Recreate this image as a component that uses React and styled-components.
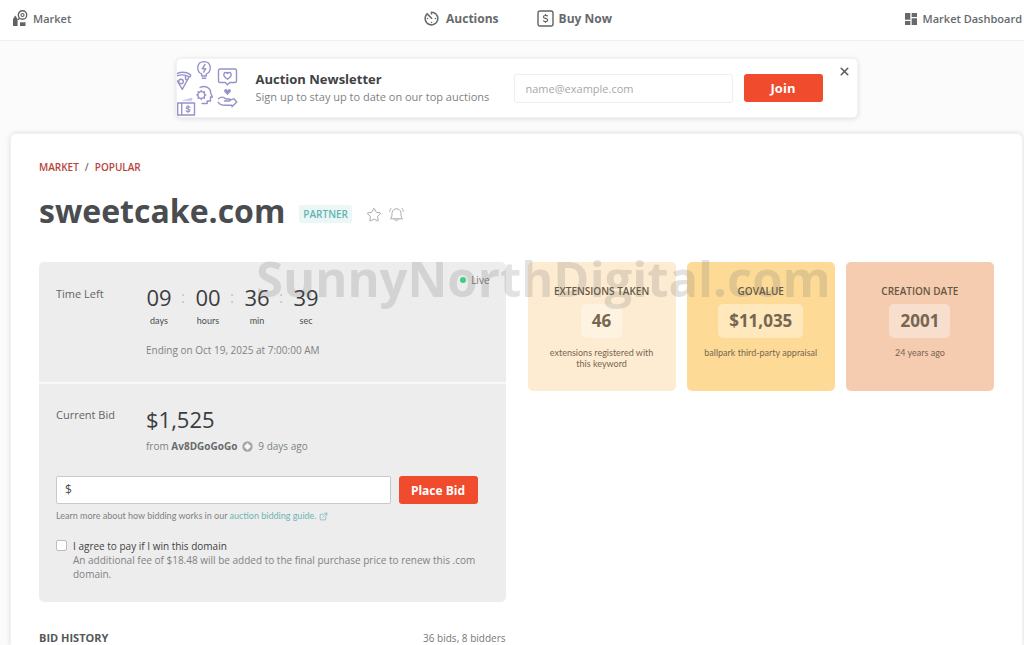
import { useState } from 'react';
import styled, { createGlobalStyle } from 'styled-components';
import { MdAvTimer, MdDashboard } from 'react-icons/md';
import { ExternalLink, Star, X } from 'lucide-react';

const smallFont = `
  font-family: Lato, 'Open Sans', sans-serif;
  font-size: 9px;
`;

const GlobalStyle = createGlobalStyle`
  * { box-sizing: border-box; }

  body {
    margin: 0;
    background: #fbfbfb;
    color: #4a4d50;
    font-family: 'Open Sans', 'Noto Sans', sans-serif;
    font-size: 11px;
    line-height: 14px;
  }

  h1, h2, p, dl, dd { margin: 0; }
  button, input { font-family: inherit; }
  a { color: inherit; text-decoration: none; }
`;

const Page = styled.div`
  display: flex;
  flex-direction: column;
  min-height: 100vh;
`;

const Header = styled.header`
  display: grid;
  grid-template-columns: 1fr auto 1fr;
  align-items: center;
  height: 41px;
  padding: 0 2px 3px 12px;
  background: #fff;
  border-bottom: 1px solid #f0f0f0;
`;

const Nav = styled.nav`
  display: flex;
  gap: 38px;
`;

const NavLink = styled.a`
  display: flex;
  align-items: center;
  justify-self: ${props => props.$align || 'start'};
  gap: ${props => (props.$align ? '4px' : '5px')};
  font-size: ${props => (props.$large ? '12px' : '11px')};
  font-weight: ${props => (props.$large ? 700 : 600)};
  color: #676a6c;
  white-space: nowrap;
`;

const Main = styled.main`
  display: flex;
  flex: 1;
  flex-direction: column;
  padding: 17px 1px 0 10px;
`;

const Banner = styled.form`
  display: flex;
  align-items: center;
  align-self: center;
  width: 100%;
  max-width: 682px;
  height: 60px;
  margin-bottom: 15px;
  padding-right: 6px;
  background: #fff;
  border: 1px solid #f2f2f2;
  border-radius: 5px;
  box-shadow: 0 1px 5px rgba(0, 0, 0, 0.12);
`;

const BannerText = styled.div`
  flex: 1;
  margin-left: 18px;
  white-space: nowrap;
`;

const BannerTitle = styled.h2`
  font-size: 13px;
  font-weight: 700;
  line-height: 18px;
  color: #3f4244;
`;

const Muted = styled.p`
  line-height: ${props => (props.$tall ? '18px' : '14px')};
  color: #808284;
`;

const EmailInput = styled.input`
  width: 219px;
  height: 29px;
  padding: 0 11px;
  font-size: 11px;
  border: 1px solid #eee;
  border-radius: 3px;
  outline: none;

  &::placeholder { color: #a8a8a8; }
`;

const Button = styled.button`
  width: 79px;
  height: 28px;
  margin-left: ${props => (props.$tight ? '8px' : '11px')};
  padding: 0;
  font-size: ${props => (props.$tight ? '12px' : '13px')};
  font-weight: 700;
  color: #fff;
  background: #f04b2d;
  border: 0;
  border-radius: 3px;
  cursor: pointer;
`;

const CloseButton = styled.button`
  display: flex;
  align-self: flex-start;
  margin: 6px 0 0 15px;
  padding: 0;
  color: #5c5f61;
  background: none;
  border: 0;
  cursor: pointer;
`;

const Card = styled.section`
  position: relative;
  flex: 1;
  padding: 26px 28px 0;
  background: #fff;
  border: 1px solid #f1f1f1;
  border-bottom: 0;
  border-radius: 6px 6px 0 0;
  box-shadow: 0 0 5px rgba(0, 0, 0, 0.12);
`;

const Breadcrumb = styled.nav`
  display: flex;
  gap: 6px;
  font-size: 10px;
  font-weight: 600;
  color: #6d7072;

  a { color: #b8453a; }
`;

const TitleRow = styled.div`
  display: flex;
  align-items: center;
  margin: 14px 0 28px;
  color: #aaa;
`;

const Title = styled.h1`
  font-size: 32px;
  font-weight: 700;
  line-height: 46px;
  color: #4a4d50;
`;

const Tag = styled.span`
  margin: 5px 14px 0;
  padding: 2px 4px;
  font-size: 10px;
  font-weight: 600;
  color: #66b4af;
  background: #eaf7f6;
  border-radius: 3px;
`;

const IconButton = styled.button`
  display: flex;
  margin: 7px 7px 0 0;
  padding: 0;
  color: inherit;
  background: none;
  border: 0;
  cursor: pointer;
`;

const Columns = styled.div`
  display: grid;
  grid-template-columns: 1fr 1fr;
  align-items: start;
  gap: 22px;
`;

const Panel = styled.div`
  background: #ededed;
  border-radius: 5px;
`;

const PanelPart = styled.section`
  min-height: ${props => props.$height};
  padding: ${props => props.$padding};

  & + & { border-top: 2px solid #f8f8f8; }
`;

const PanelRow = styled.div`
  display: grid;
  grid-template-columns: 90px 1fr auto;
`;

const Label = styled.span`
  padding-top: 3px;
  font-size: 11px;
  color: #616466;
`;

const Clock = styled.div`
  display: flex;
`;

const ClockCell = styled.div`
  width: 26px;
  ${smallFont}
  text-align: center;

  & + & { margin-left: 23px; }
`;

const Digits = styled.div`
  position: relative;
  margin-bottom: 4px;
  font-family: 'Open Sans', 'Noto Sans', sans-serif;
  font-size: 22px;
  line-height: 26px;
  color: #3a3d40;
`;

/* faint separator that hangs in the gap after the digits */
const Colon = styled.span`
  position: absolute;
  left: 35px;
  font-size: 16px;
  color: #c4c4c4;
`;

const Ending = styled(Muted)`
  margin-top: 15px;
  font-size: 10px;
`;

const Live = styled.span`
  display: flex;
  align-items: center;
  align-self: start;
  gap: 5px;
  margin-top: -11px;
  font-size: 10px;
  color: #777;

  &::before {
    content: '';
    width: 6px;
    height: 6px;
    background: #43cd80;
    border-radius: 50%;
  }
`;

const Price = styled.div`
  font-size: 22px;
  line-height: 28px;
  color: #3a3d40;
`;

const Bidder = styled(Muted)`
  display: flex;
  align-items: center;
  gap: 5px;
  margin-top: 6px;
  font-size: 10px;

  b { color: #686b6d; }
`;

const BidForm = styled.form`
  display: flex;
  margin: 23px 0 5px;
`;

const BidField = styled.label`
  display: flex;
  flex: 1;
  align-items: center;
  height: 28px;
  padding: 0 8px;
  font-size: 12px;
  background: #fff;
  border: 1px solid #c9c9c9;
  border-radius: 2px;
`;

const BidInput = styled.input`
  flex: 1;
  min-width: 0;
  padding: 0 4px;
  font-size: 12px;
  border: 0;
  outline: none;
`;

const Help = styled(Muted)`
  display: flex;
  align-items: center;
  gap: 2px;
  ${smallFont}

  a {
    display: flex;
    align-items: center;
    gap: 3px;
    color: #6fb5b3;
  }
`;

const Agreement = styled.div`
  display: grid;
  grid-template-columns: 11px 1fr;
  column-gap: 6px;
  margin-top: 16px;
  font-size: 10px;

  label { color: #3f4244; }
  p { grid-column: 2; }
`;

const Checkbox = styled.input`
  appearance: none;
  width: 11px;
  height: 11px;
  margin: 1px 0 0;
  background: #fff;
  border: 1px solid #bdbdbd;
  border-radius: 2px;

  &:checked { background: #66b4af; }
`;

const Stats = styled.dl`
  display: grid;
  grid-template-columns: repeat(3, 1fr);
  gap: 11px;
`;

const Stat = styled.div`
  display: flex;
  flex-direction: column;
  align-items: center;
  height: 129px;
  padding: 22px 16px 0;
  ${smallFont}
  line-height: 11px;
  text-align: center;
  color: #766651;
  background: ${props => props.$color};
  border-radius: 5px;

  dt {
    font-family: 'Open Sans', 'Noto Sans', sans-serif;
    font-size: 10px;
    font-weight: 600;
    line-height: 14px;
    color: #665844;
    white-space: nowrap;
  }
`;

const StatValue = styled.dd`
  margin: 6px 0 9px;
  padding: 0 11px;
  font-family: 'Open Sans', 'Noto Sans', sans-serif;
  font-size: 17px;
  font-weight: 700;
  line-height: 34px;
  background: rgba(255, 255, 255, 0.36);
  border-radius: 5px;
`;

const History = styled.div`
  display: flex;
  align-items: center;
  justify-content: space-between;
  margin-top: 29px;
  font-size: 10px;
  color: #777;

  h2 {
    font-size: 11px;
    font-weight: 700;
    line-height: 14px;
    color: #55585a;
  }
`;

const Watermark = styled.span`
  position: absolute;
  top: 112px;
  left: 245px;
  font-size: 49px;
  font-weight: 700;
  line-height: 64px;
  color: rgba(110, 110, 110, 0.2);
  pointer-events: none;
`;

const MarketIcon = () => (
  <svg width="16" height="17" viewBox="0 0 16 17" fill="none" stroke="#606365">
    <circle cx="10.5" cy="5" r="4.2" strokeWidth="1.4" />
    <circle cx="10.5" cy="5" r="1.5" strokeWidth="1.2" />
    <path d="M1 9 L3.3 5.5 L5.6 9 V16 H1 Z" fill="#606365" stroke="none" />
    <path d="M8 12.3 H13.5 V16 H8 Z" fill="#606365" stroke="none" />
    <path d="M5.8 9.8 L7.6 8.4" strokeWidth="1.4" />
  </svg>
);

const BuyIcon = () => (
  <svg width="17" height="17" viewBox="0 0 17 17" fill="none" stroke="#606365" strokeWidth="1.4">
    <rect x="1" y="1" width="15" height="15" rx="2" />
    <path d="M10.8 6.3 C10.2 5.3 6.4 4.9 6.4 6.9 C6.4 8.8 10.8 8 10.8 10.1 C10.8 12.1 6.9 11.9 6.1 10.5 M8.5 3.9 V5.4 M8.5 11.6 V13.1" strokeWidth="1.2" />
  </svg>
);

const BellIcon = () => (
  <svg width="15" height="15" viewBox="0 0 15 15" fill="none" stroke="currentColor" strokeLinejoin="round" strokeLinecap="round">
    <path d="M1.8 11.5 C3.4 9.8 2.8 7.5 3.1 5.4 C3.6 3 5.4 1.8 7.5 1.8 C9.6 1.8 11.4 3 11.9 5.4 C12.2 7.5 11.6 9.8 13.2 11.5 Z" />
    <path d="M5.6 12 C6 14.3 9 14.3 9.4 12 M0.7 4.4 C0.8 3.1 1.3 2 2.2 1.2 M14.3 4.4 C14.2 3.1 13.7 2 12.8 1.2" />
  </svg>
);

const MemberIcon = () => (
  <svg width="11" height="11" viewBox="0 0 11 11" fill="none">
    <circle cx="5.5" cy="5.5" r="5.2" fill="#a6a6a6" />
    <path d="M5.5 2 L7.3 3.7 L9 5.5 L7.3 7.3 L5.5 9 L3.7 7.3 L2 5.5 L3.7 3.7 Z" fill="#f6f6f6" />
  </svg>
);

const NewsletterArt = () => (
  <svg width="61" height="58" viewBox="0 0 61 58" fill="none" stroke="#9693c8" strokeWidth="1.4" strokeLinecap="round" strokeLinejoin="round">
    <path d="M24.7 17 V15.2 C19 12.3 19.2 2.8 27 2.6 C34.8 2.8 35 12.3 29.3 15.2 V17 Z M25.3 19.3 H28.7" />
    <path d="M28 5.5 L25.2 9.8 H28.7 L26.6 13.2" />
    <path d="M0 14.5 C4.5 12.6 9.5 13 13.5 15.6 C14 17.3 12.8 18 11.7 17.6 C8 15.5 4 15.4 0 16.8 M12 18 L5.3 30.3 L0 21.5" />
    <circle cx="4" cy="22.5" r="2.3" />
    <path d="M8.5 17.2 V19.5 C8.5 21 10 21 10.6 20.3" />
    <path d="M43 10 H58 C59 10 59.5 10.5 59.5 11.5 V22 C59.5 23 59 23.5 58 23.5 H52.7 L50.5 25.8 L48.3 23.5 H43 C42 23.5 41.5 23 41.5 22 V11.5 C41.5 10.5 42 10 43 10 Z" />
    <path d="M50.5 20.3 C43.5 15.3 48.3 11.8 50.5 14.5 C52.7 11.8 57.5 15.3 50.5 20.3 Z" />
    <path d="M23 28.5 C28 25.8 34 29 33.6 34 L35.5 38 H33.5 V42 H30.2 V44.5 H25" />
    <circle cx="24.3" cy="36" r="3.4" />
    <path d="M24.3 31.4 V32.2 M24.3 39.8 V40.6 M19.8 36 H20.6 M28 36 H28.8 M21.1 32.8 L21.7 33.4 M26.9 38.6 L27.5 39.2 M27.5 32.8 L26.9 33.4 M21.7 38.6 L21.1 39.2" />
    <path d="M50.5 35.5 C44.5 31.3 48.5 29.1 50.5 31.3 C52.5 29.1 56.5 31.3 50.5 35.5 Z" fill="#9693c8" strokeWidth="0.6" />
    <path d="M41.5 39.7 C44 37.6 47 38 49 40 H52 C54 40 53.8 42 52 42 H47.5 M52.8 41 L57 39.8 L59.7 43 L55 47.8 V46.3 H48 C45 46.3 42.5 45 41.3 43.3" />
    <path d="M0.7 44 H17.5 V56 H0.7 Z M4.7 44 V56" />
    <path d="M13 48.4 C12 47.1 9 47.3 9.3 48.9 C9.6 50.6 13 49.5 13 51.4 C13 53.1 9.7 53 9 51.8 M11.1 46.4 V53.8" strokeWidth="1.1" />
    <path d="M6 41.5 L15 39 V41.5 Z" fill="#c7c5e4" stroke="#c7c5e4" strokeWidth="0.5" />
  </svg>
);

const clock = [
  { value: '09', unit: 'days' },
  { value: '00', unit: 'hours' },
  { value: '36', unit: 'min' },
  { value: '39', unit: 'sec' }
];

const stats = [
  { title: 'EXTENSIONS TAKEN', value: '46', note: 'extensions registered with this keyword', color: '#fdecd1' },
  { title: 'GOVALUE', value: '$11,035', note: 'ballpark third-party appraisal', color: '#fddb97' },
  { title: 'CREATION DATE', value: '2001', note: '24 years ago', color: '#f5ccb0' }
];

const Newsletter = ({ onClose }) => (
  <Banner onSubmit={e => e.preventDefault()}>
    <NewsletterArt />
    <BannerText>
      <BannerTitle>Auction Newsletter</BannerTitle>
      <Muted $tall>Sign up to stay up to date on our top auctions</Muted>
    </BannerText>
    <EmailInput type="email" aria-label="Email" placeholder="name@example.com" />
    <Button type="submit">Join</Button>
    <CloseButton type="button" aria-label="Close" onClick={onClose}>
      <X size={13} strokeWidth={3} />
    </CloseButton>
  </Banner>
);

const App = () => {
  const [showBanner, setShowBanner] = useState(true);
  const [bid, setBid] = useState('');

  return (
    <Page>
      <GlobalStyle />
      <Header>
        <NavLink href="#market"><MarketIcon />Market</NavLink>
        <Nav>
          <NavLink $large href="#auctions"><MdAvTimer size={19} />Auctions</NavLink>
          <NavLink $large href="#buy"><BuyIcon />Buy Now</NavLink>
        </Nav>
        <NavLink $align="end" href="#dashboard"><MdDashboard size={16} />Market Dashboard</NavLink>
      </Header>

      <Main>
        {showBanner && <Newsletter onClose={() => setShowBanner(false)} />}

        <Card>
          <Breadcrumb>
            <a href="#market">MARKET</a>
            <span>/</span>
            <a href="#popular">POPULAR</a>
          </Breadcrumb>

          <TitleRow>
            <Title>sweetcake.com</Title>
            <Tag>PARTNER</Tag>
            <IconButton aria-label="Add to favorites"><Star size={16} strokeWidth={1.5} /></IconButton>
            <IconButton aria-label="Notify me"><BellIcon /></IconButton>
          </TitleRow>

          <Columns>
            <div>
              <Panel>
                <PanelPart $height="120px" $padding="22px 16px 0 17px">
                  <PanelRow>
                    <Label>Time Left</Label>
                    <div>
                      <Clock>
                        {clock.map(({ value, unit }, i) => (
                          <ClockCell key={unit}>
                            <Digits>{value}{i < 3 && <Colon>:</Colon>}</Digits>
                            {unit}
                          </ClockCell>
                        ))}
                      </Clock>
                      <Ending>Ending on Oct 19, 2025 at 7:00:00 AM</Ending>
                    </div>
                    <Live>Live</Live>
                  </PanelRow>
                </PanelPart>

                <PanelPart $height="220px" $padding="21px 28px 0 17px">
                  <PanelRow>
                    <Label>Current Bid</Label>
                    <div>
                      <Price>$1,525</Price>
                      <Bidder>
                        <span>from <b>Av8DGoGoGo</b></span>
                        <MemberIcon />
                        <span>9 days ago</span>
                      </Bidder>
                    </div>
                  </PanelRow>
                  <BidForm onSubmit={e => e.preventDefault()}>
                    <BidField>
                      $
                      <BidInput aria-label="Bid amount" value={bid} onChange={e => setBid(e.target.value)} />
                    </BidField>
                    <Button $tight type="submit">Place Bid</Button>
                  </BidForm>
                  <Help>
                    Learn more about how bidding works in our
                    <a href="#guide">auction bidding guide.<ExternalLink size={9} /></a>
                  </Help>
                  <Agreement>
                    <Checkbox type="checkbox" id="agree" />
                    <label htmlFor="agree">I agree to pay if I win this domain</label>
                    <Muted>An additional fee of $18.48 will be added to the final purchase price to renew this .com domain.</Muted>
                  </Agreement>
                </PanelPart>
              </Panel>

              <History>
                <h2>BID HISTORY</h2>
                <span>36 bids, 8 bidders</span>
              </History>
            </div>

            <Stats>
              {stats.map(({ title, value, note, color }) => (
                <Stat key={title} $color={color}>
                  <dt>{title}</dt>
                  <StatValue>{value}</StatValue>
                  <dd>{note}</dd>
                </Stat>
              ))}
            </Stats>
          </Columns>
          <Watermark>SunnyNorthDigital.com</Watermark>
        </Card>
      </Main>
    </Page>
  );
};

export default App;
